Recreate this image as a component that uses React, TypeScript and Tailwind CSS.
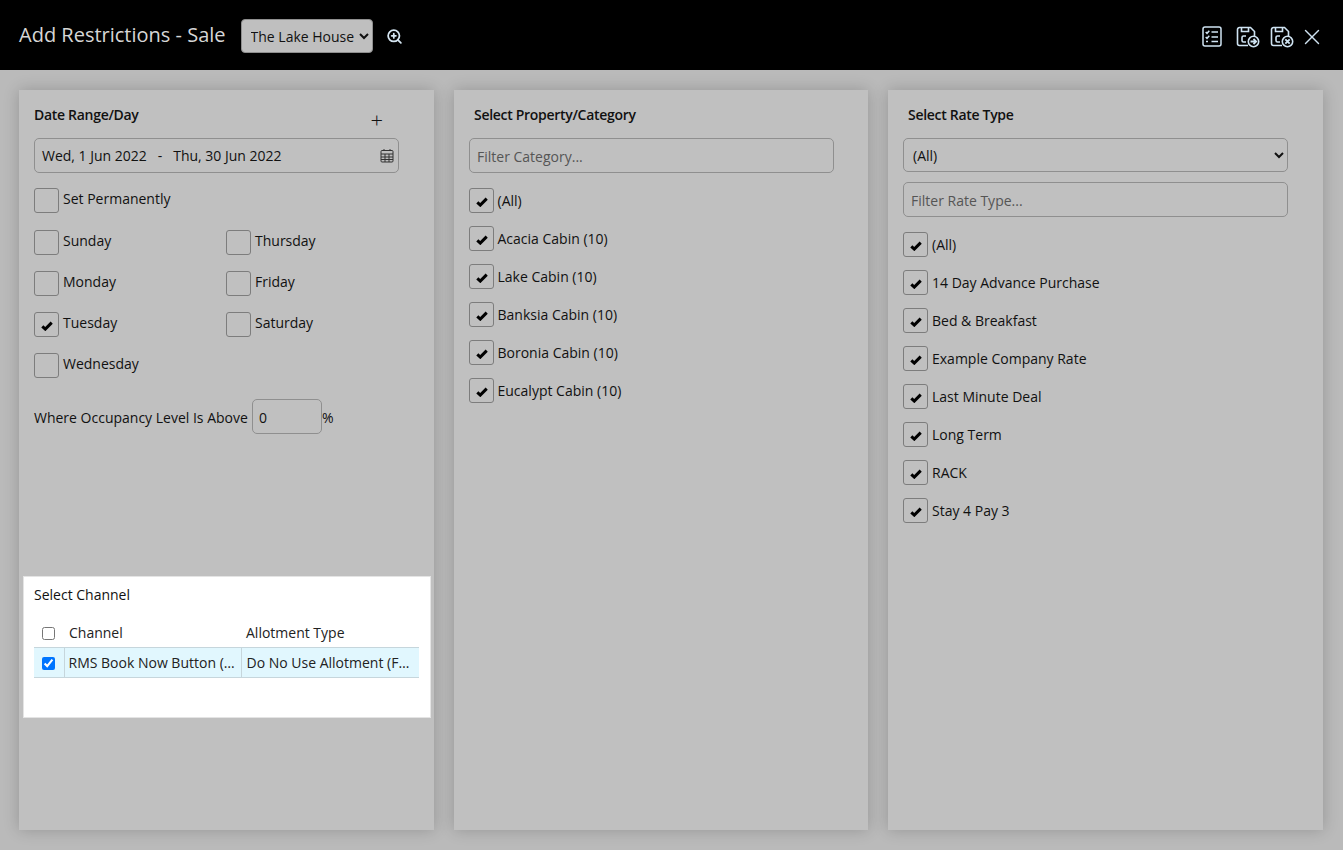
import { X, ZoomIn } from "lucide-react";

const days = [
  ["Sunday", "Thursday"],
  ["Monday", "Friday"],
  ["Tuesday", "Saturday"],
  ["Wednesday", ""],
];
const categories = ["(All)", "Acacia Cabin (10)", "Lake Cabin (10)", "Banksia Cabin (10)", "Boronia Cabin (10)", "Eucalypt Cabin (10)"];
const rateTypes = ["(All)", "14 Day Advance Purchase", "Bed & Breakfast", "Example Company Rate", "Last Minute Deal", "Long Term", "RACK", "Stay 4 Pay 3"];

function Tick() {
  return (
    <svg viewBox="0 0 12 10" className="mt-[2px] h-[10px] w-[12px]">
      <path d="M1.300 5.300 4.300 8.100 10.700 1.600" fill="none" stroke="#000" strokeWidth="3" />
    </svg>
  );
}

function Check({ checked, label }: { checked?: boolean; label?: string }) {
  return (
    <div className="flex items-start">
      <div className="flex h-[25px] w-[25px] shrink-0 items-center justify-center rounded-[3px] border border-[#7d7d7d]">
        {checked && <Tick />}
      </div>
      {label && <span className="ml-1 leading-[22px]">{label}</span>}
    </div>
  );
}

function ListRow({ label, wide }: { label: string; wide?: boolean }) {
  return (
    <div className="flex h-[25px] items-center">
      <div className="flex h-[25px] w-[25px] shrink-0 items-center justify-center rounded-[3px] border border-[#7d7d7d]">
        <Tick />
      </div>
      <span className={wide ? "ml-1" : "ml-[3.500px]"}>{label}</span>
    </div>
  );
}

function SaveIcon({ kind }: { kind: "go" | "cancel" }) {
  return (
    <svg viewBox="0 0 24 22" className="h-[22px] w-[24px]" fill="none" stroke="#cfe3f2" strokeWidth="1.6">
      <path d="M12 19.500H3.500a2 2 0 0 1-2-2v-14a2 2 0 0 1 2-2h11l4 4v5" />
      <path d="M5.500 1.500v4h7v-4" />
      <path d="M10 10H7.500A1.500 1.500 0 0 0 6 11.500v3A1.500 1.500 0 0 0 7.500 16H10" />
      <circle cx="17.500" cy="15.500" r="5.200" fill="#000" />
      {kind === "go" ? (
        <path d="M14.500 15.500h5.500M17.500 12.800l2.700 2.700-2.700 2.700" strokeWidth="1.800" />
      ) : (
        <path d="M15.300 13.300l4.400 4.400M19.700 13.300l-4.400 4.400" strokeWidth="1.800" />
      )}
    </svg>
  );
}

export default function App() {
  return (
    <div className="flex h-[850px] flex-col overflow-hidden bg-[#bababa] font-['Open_Sans',sans-serif] text-[14px] text-[#111]">
      <header className="flex h-[70px] shrink-0 items-center bg-black pl-[19px] pr-[18px]">
        <h1 className="text-[20px] leading-none text-[#d6d6d6]">Add Restrictions - Sale</h1>
        <select className="ml-[15px] mt-[2px] h-[34px] w-[132px] rounded-[4px] border border-[#8f8f8f] bg-[#bfbfbf] pl-[5px] text-[14px] text-[#111]">
          <option>The Lake House</option>
        </select>
        <ZoomIn size={17} strokeWidth={2.500} className="ml-[13px] mt-[3px] text-[#d5e6f2]" />
        <div className="ml-auto mt-[3px] flex items-center">
          <svg viewBox="0 0 20 21" className="h-[21px] w-[20px]" fill="none" stroke="#cfe3f2" strokeWidth="1.500">
            <rect x="1" y="1" width="18" height="19" rx="2" />
            <path d="M3.700 6l1.300 1.300L7.300 4.700M3.700 11l1.300 1.300 2.300-2.600M4 15.500h2M9.500 6H16M9.500 11H16M9.500 15.500H16" />
          </svg>
          <div className="ml-[14px]"><SaveIcon kind="go" /></div>
          <div className="ml-[10px]"><SaveIcon kind="cancel" /></div>
          <X size={26} strokeWidth={1.300} className="ml-[5px] text-[#cfe3f2]" />
        </div>
      </header>

      <main className="flex flex-1 gap-5 pb-5 pl-[19px] pr-5 pt-5">
        <section className="flex w-[415px] flex-col bg-[#c0c0c0] shadow-[0_0_15px_rgba(0,0,0,0.2)]">
          <div className="px-[15px]">
            <div className="flex h-[48px] justify-between pr-[15px] pt-[15px]">
              <h2 className="font-semibold leading-5 tracking-[-0.3px]">Date Range/Day</h2>
              <span className="mr-[21px] mt-[2px] text-[22px] font-light leading-6">+</span>
            </div>
            <div className="flex h-[35px] w-[365px] items-center justify-between rounded-[5px] border border-[#8f8f8f] pl-[7px] pr-[4px]">
              <span className="whitespace-pre">Wed, 1 Jun 2022   -   Thu, 30 Jun 2022</span>
              <svg viewBox="0 0 14 15" className="h-[15px] w-[14px]" fill="none" stroke="#333" strokeWidth="1">
                <rect x="1" y="2.500" width="12" height="11.500" rx="1" />
                <path d="M1 6h12M1 9h12M1 11.500h12M5 6v8M9 6v8M4 1v2M10 1v2" />
              </svg>
            </div>
            <div className="mt-[15px]">
              <Check label="Set Permanently" />
            </div>
            <div className="mt-[17px] grid grid-cols-[192px_1fr] gap-y-4">
              {days.flat().map((d, i) =>
                d ? <Check key={d} label={d} checked={d === "Tuesday"} /> : <div key={i} />
              )}
            </div>
            <div className="mt-[21px] flex items-center">
              <span className="pt-[2px]">Where Occupancy Level Is Above</span>
              <div className="ml-1 flex h-[35px] w-[70px] items-center rounded-[5px] border border-[#8f8f8f] pl-[6px] pt-[2px]">0</div>
              <span className="pt-[2px]">%</span>
            </div>
          </div>

          <div className="ml-1 mt-[142px] h-[142px] w-[408px] border border-[#e4e4e4] bg-white px-[10px] pt-[7px] text-[#222]">
            <h2 className="font-medium leading-[22px] text-[#111]">Select Channel</h2>
            <table className="mt-[14px] w-[385px] table-fixed border-collapse">
              <thead>
                <tr className="h-[27px]">
                  <th className="w-[30px] pb-[4px] pr-[2px] text-center font-normal">
                    <input type="checkbox" className="align-middle" />
                  </th>
                  <th className="w-[177px] pb-[1px] pl-[5px] text-left font-normal">Channel</th>
                  <th className="pb-[1px] pl-[5px] text-left font-normal">Allotment Type</th>
                </tr>
              </thead>
              <tbody>
                <tr className="h-[30px] border-y border-[#c6d6dc] bg-[#e1f7fe]">
                  <td className="pr-[1px] text-center">
                    <input type="checkbox" defaultChecked className="align-middle" />
                  </td>
                  <td className="truncate border-l border-[#c6d6dc] pl-[4px] pr-[3px]">RMS Book Now Button (Sell Rate)</td>
                  <td className="truncate border-l border-[#c6d6dc] pl-[5px] pr-[5px]">Do No Use Allotment (Free Sell)</td>
                </tr>
              </tbody>
            </table>
          </div>
        </section>

        <section className="w-[414px] bg-[#c0c0c0] pl-[15px] shadow-[0_0_15px_rgba(0,0,0,0.2)]">
          <h2 className="h-[48px] pl-[5px] pt-[15px] font-semibold leading-5 tracking-[-0.3px]">Select Property/Category</h2>
          <input
            placeholder="Filter Category..."
            className="h-[35px] w-[365px] rounded-[5px] border border-[#8f8f8f] bg-transparent pl-[7px] pt-[2px] placeholder:text-[#555]"
          />
          <div className="mt-[15px] flex flex-col gap-[13px]">
            {categories.map((c) => (
              <ListRow key={c} label={c} />
            ))}
          </div>
        </section>

        <section className="w-[435px] bg-[#c0c0c0] pl-[15px] shadow-[0_0_15px_rgba(0,0,0,0.2)]">
          <h2 className="h-[48px] pl-[5px] pt-[15px] font-semibold leading-5 tracking-[-0.3px]">Select Rate Type</h2>
          <select className="h-[34px] w-[385px] rounded-[5px] border border-[#8f8f8f] bg-transparent pl-[5px]">
            <option>(All)</option>
          </select>
          <input
            placeholder="Filter Rate Type..."
            className="mt-[10px] block h-[35px] w-[385px] rounded-[5px] border border-[#8f8f8f] bg-transparent pl-[7px] pt-[2px] placeholder:text-[#555]"
          />
          <div className="mt-[15px] flex flex-col gap-[13px]">
            {rateTypes.map((r) => (
              <ListRow key={r} label={r} wide />
            ))}
          </div>
        </section>
      </main>
    </div>
  );
}
